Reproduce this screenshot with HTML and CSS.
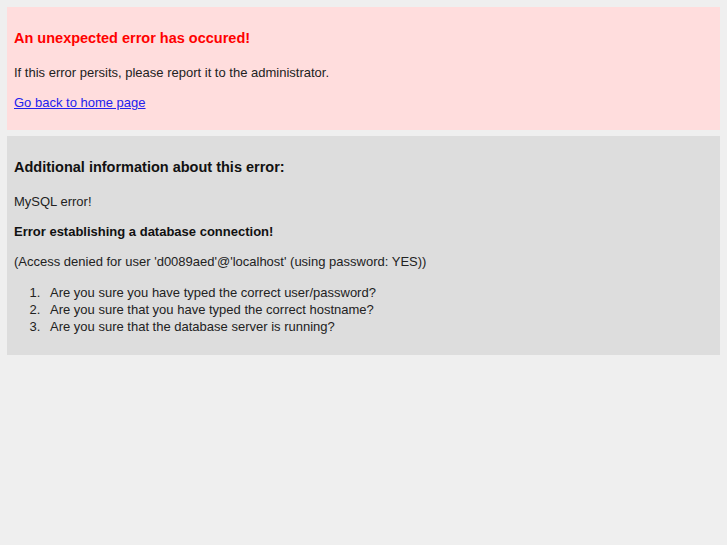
FILE: index.html
```html
<!DOCTYPE html>
<html>
<head>
<meta charset="utf-8">
<title>Error</title>
<link rel="stylesheet" href="styles.css">
</head>
<body>
<div class="box box-error">
  <h1 class="title title-error">An unexpected error has occured!</h1>
  <p class="text">If this error persits, please report it to the administrator.</p>
  <p class="text"><a class="link" href="#">Go back to home page</a></p>
</div>
<div class="box box-info">
  <h2 class="title">Additional information about this error:</h2>
  <p class="text">MySQL error!</p>
  <p class="text strong">Error establishing a database connection!</p>
  <p class="text">(Access denied for user 'd0089aed'@'localhost' (using password: YES))</p>
  <ol class="list">
    <li class="item">Are you sure you have typed the correct user/password?</li>
    <li class="item">Are you sure that you have typed the correct hostname?</li>
    <li class="item">Are you sure that the database server is running?</li>
  </ol>
</div>
</body>
</html>
```
FILE: styles.css
```css
html {
  background: #efefef;
}
body {
  margin: 0;
  padding: 7px;
  font-family: "Liberation Sans", Arial, sans-serif;
  font-size: 13px;
  color: #222222;
}
.box {
  padding: 7px;
  margin-bottom: 6px;
  display: flow-root;
}
.box-error {
  background: #ffdddd;
}
.box-info {
  background: #dddddd;
}
.title {
  font-size: 14.5px;
  font-weight: bold;
  line-height: 20px;
  margin: 14px 0 17px;
  color: #111111;
}
.title-error {
  color: #ff0000;
}
.text {
  line-height: 16px;
  margin: 14px 0 12px;
}
.strong {
  font-weight: bold;
  color: #111111;
}
.link {
  color: #2222ee;
}
.list {
  margin: 14px 0 13px;
  padding-left: 30px;
  line-height: 17px;
}
.item {
  padding-left: 6px;
}
```
